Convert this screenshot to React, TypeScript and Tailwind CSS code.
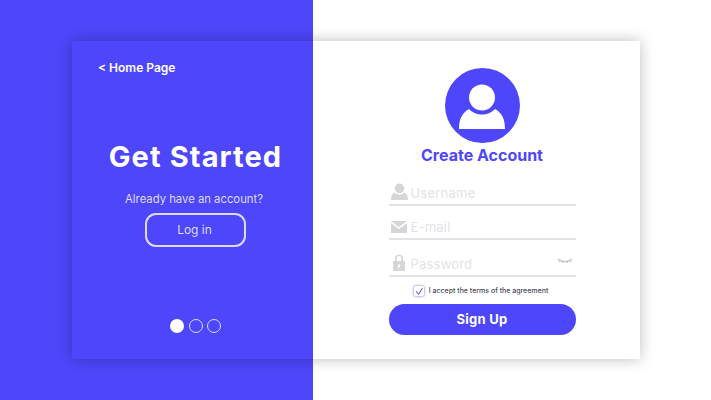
const UserGlyph = ({ className }: { className: string }) => (
  <svg viewBox="0 0 46 46" className={className} fill="currentColor">
    <circle cx="23" cy="14.5" r="13" />
    <path d="M0 46 C0 36 3 30 10 26 C14 30 18 31.5 23 31.5 C28 31.5 32 30 36 26 C43 30 46 36 46 46 Z" />
  </svg>
);

const Field = ({
  icon,
  label,
  className,
  right,
}: {
  icon: React.ReactNode;
  label: string;
  className: string;
  right?: React.ReactNode;
}) => (
  <div className={`flex items-center border-b-2 border-[#e3e3e6] ${className}`}>
    <div className="w-[21px] flex justify-center text-[#d6d6da]">{icon}</div>
    <span className="ml-[1px] text-[13px] leading-[18px] tracking-[0.2px] text-[#e2e2e6]">{label}</span>
    {right}
  </div>
);

export default function App() {
  return (
    <div
      className="h-[400px] w-[711px] overflow-hidden pt-[41px] pl-[72px] bg-[linear-gradient(to_right,#4d46fb_313px,#ffffff_313px)]"
      style={{ fontFamily: 'Inter, "Noto Sans", sans-serif' }}
    >
      <div className="flex h-[318px] w-[568px] shadow-[0_0_14px_rgba(0,0,0,0.26)]">
        {/* left panel */}
        <div className="flex w-[241px] flex-col bg-[#4d46fb] text-white">
          <div className="mt-[19px] ml-[26px] text-[12px] leading-4 font-semibold">&lt; Home Page</div>
          <div className="mt-[63px] ml-[6px] text-center text-[29px] leading-[36px] font-bold tracking-[1.1px]">Get Started</div>
          <div className="mt-[16px] ml-[3px] text-center text-[11.3px] leading-4 text-[#dcdbff]">Already have an account?</div>
          <div className="mt-[6px] ml-[73px] flex h-[34px] w-[101px] items-center justify-center rounded-[11px] border-2 border-[#dcdbff] pr-[2px] text-[12px] text-[#dcdbff]">
            Log in
          </div>
          <div className="mt-[72px] ml-[98px] flex gap-[4.5px]">
            <div className="h-[14px] w-[14px] rounded-full bg-white" />
            <div className="h-[14px] w-[14px] rounded-full border border-[#dcdbff]" />
            <div className="h-[14px] w-[14px] rounded-full border border-[#dcdbff]" />
          </div>
        </div>

        {/* right panel */}
        <div className="flex flex-1 flex-col items-center bg-white pl-[11px]">
          <div className="mt-[27px] flex h-[75px] w-[75px] items-end justify-center rounded-full bg-[#4d46fb] pb-[14px] text-white">
            <UserGlyph className="h-[46px] w-[46px]" />
          </div>
          <div className="mt-[1px] h-[22px] text-[16px] leading-[22px] font-bold text-[#4d46fb]">Create Account</div>
          <div className="mt-[17px] flex w-[187px] flex-col">
            <Field
              label="Username"
              className="h-[23px] pb-[1px]"
              icon={<UserGlyph className="mb-[3px] h-[17px] w-[17px]" />}
            />
            <Field
              label="E-mail"
              className="mt-[11px] h-[23px] pb-[2px]"
              icon={
                <svg viewBox="0 0 16 12" className="h-[12px] w-[16px]" fill="currentColor">
                  <path d="M0 0 H16 L8 6 Z" />
                  <path d="M0 2 L8 8 L16 2 V12 H0 Z" />
                </svg>
              }
            />
            <Field
              label="Password"
              className="mt-[13px] h-[24px]"
              icon={
                <svg viewBox="0 0 12 17" className="mb-[4px] h-[17px] w-[12px]" fill="currentColor">
                  <path d="M2 7 V4.5 a4 4 0 0 1 8 0 V7 H8.4 V4.5 a2.4 2.4 0 0 0 -4.8 0 V7 Z" />
                  <path fillRule="evenodd" d="M0 7 H12 V17 H0 Z M5 10.5 V13.5 H7 V10.5 Z" />
                </svg>
              }
              right={
                <svg viewBox="0 0 16 6" className="mr-[3px] mb-[6px] ml-auto h-[6px] w-[16px]" fill="none" stroke="#c4c4ca" strokeWidth="1.2">
                  <path d="M1 1 C5 4.5 11 4.5 15 1" />
                  <path d="M3 2.6 L2 4 M6 3.6 L5.6 5 M10 3.6 L10.4 5 M13 2.6 L14 4" />
                </svg>
              }
            />
          </div>
          <div className="mt-[8px] ml-[-3px] flex items-center gap-[4px]">
            <div className="flex h-[12px] w-[12px] items-center justify-center rounded-[3px] border border-[#c9c7f5] shadow-[0_0_2px_rgba(0,0,0,0.25)]">
              <svg viewBox="0 0 12 12" className="h-[11px] w-[11px]" fill="none" stroke="#4d46fb" strokeWidth="1.2">
                <path d="M2.5 5.5 L5.5 9.5 L10 2" />
              </svg>
            </div>
            <span className="text-[7px] leading-3 font-medium text-[#4a4a55]">I accept the terms of the agreement</span>
          </div>
          <div className="mt-[7px] flex h-[31px] w-[187px] items-center justify-center rounded-full bg-[#4d46fb] text-[13px] font-bold tracking-[0.3px] text-white">
            Sign Up
          </div>
        </div>
      </div>
    </div>
  );
}
